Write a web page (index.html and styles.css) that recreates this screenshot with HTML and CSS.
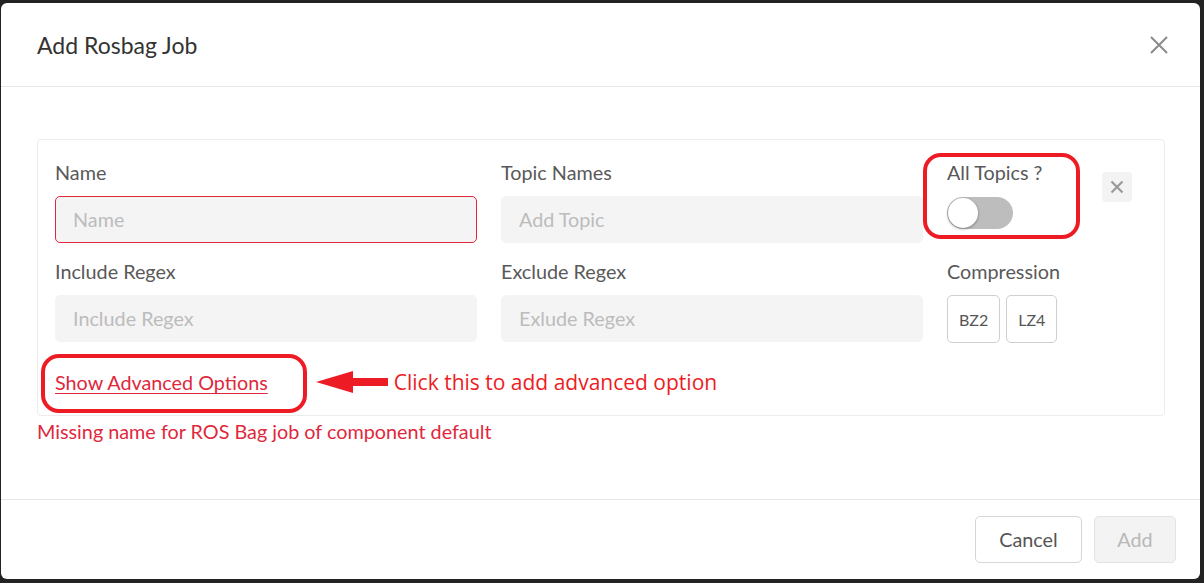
FILE: index.html
```html
<!DOCTYPE html>
<html>
<head>
<meta charset="utf-8">
<link rel="stylesheet" href="styles.css">
</head>
<body>
<div class="modal">
  <div class="modal-header">
    <h1 class="title">Add Rosbag Job</h1>
    <button class="close-btn" aria-label="Close">
      <svg width="20" height="20" viewBox="0 0 20 20"><path d="M2 2 L18 18 M18 2 L2 18" stroke="#8a8a8a" stroke-width="2" fill="none"/></svg>
    </button>
  </div>
  <div class="modal-body">
    <div class="card">
      <div class="grid">
        <div class="field">
          <label class="label">Name</label>
          <div class="input error"><span class="ph">Name</span></div>
        </div>
        <div class="field">
          <label class="label">Topic Names</label>
          <div class="input"><span class="ph">Add Topic</span></div>
        </div>
        <div class="field field-toggle">
          <label class="label">All Topics ?</label>
          <div class="toggle"><span class="knob"></span></div>
          <div class="ring ring-toggle"></div>
        </div>
        <button class="remove-btn" aria-label="Remove">
          <svg width="14" height="14" viewBox="0 0 14 14"><path d="M1.5 1.5 L12.5 12.5 M12.5 1.5 L1.5 12.5" stroke="#9a9a9a" stroke-width="2.2" fill="none"/></svg>
        </button>

        <div class="field">
          <label class="label">Include Regex</label>
          <div class="input"><span class="ph">Include Regex</span></div>
        </div>
        <div class="field">
          <label class="label">Exclude Regex</label>
          <div class="input"><span class="ph">Exlude Regex</span></div>
        </div>
        <div class="field">
          <label class="label">Compression</label>
          <div class="chips">
            <button class="chip">BZ2</button>
            <button class="chip">LZ4</button>
          </div>
        </div>
        <div></div>
      </div>
      <div class="adv-row">
        <div class="adv-wrap">
          <a class="adv-link">Show Advanced Options</a>
          <div class="ring ring-link"></div>
        </div>
        <div class="annotation">
          <svg class="arrow" width="72" height="24" viewBox="0 0 72 24"><polygon points="0,12 37,1 37,8 72,8 72,16 37,16 37,23" fill="#ed1c24"/></svg>
          <span class="anno-text">Click this to add advanced option</span>
        </div>
      </div>
    </div>
    <div class="error-text">Missing name for ROS Bag job of component default</div>
  </div>
  <div class="modal-footer">
    <button class="btn btn-cancel">Cancel</button>
    <button class="btn btn-add">Add</button>
  </div>
</div>
</body>
</html>
```

FILE: styles.css
```css
* { box-sizing: border-box; }
html, body { margin: 0; padding: 0; }
body {
  background: #232323;
  width: 1204px;
  height: 583px;
  overflow: hidden;
  font-family: Lato, "Liberation Sans", sans-serif;
}
.modal {
  margin: 3px 4px 0 1px;
  width: 1199px;
  height: 576px;
  background: #fff;
  border-radius: 6px;
  display: flex;
  flex-direction: column;
}
.modal-header {
  height: 84px;
  flex: none;
  display: flex;
  align-items: center;
  justify-content: space-between;
  padding: 0 31px 0 36px;
  border-bottom: 1px solid #e6e6e6;
}
.title {
  margin: 0;
  font-size: 23px;
  font-weight: 400;
  color: #333;
}
.close-btn {
  border: 0;
  background: none;
  padding: 0;
  width: 20px;
  height: 20px;
  display: flex;
}
.modal-body {
  flex: none;
  height: 413px;
  padding: 52px 35px 0 36px;
  border-bottom: 1px solid #e6e6e6;
}
.card {
  border: 1px solid #ececec;
  border-radius: 4px;
  padding: 20px 32px 19px 17px;
}
.grid {
  display: grid;
  grid-template-columns: 422px 422px 131px 30px;
  column-gap: 24px;
  row-gap: 16px;
}
.field {
  display: flex;
  flex-direction: column;
  position: relative;
}
.label {
  font-size: 19.8px;
  line-height: 24px;
  color: #595959;
  margin-bottom: 12px;
}
.input {
  height: 47px;
  background: #f4f4f4;
  border: 1px solid #f4f4f4;
  border-radius: 5px;
  display: flex;
  align-items: center;
  padding: 0 17px 1px;
}
.input.error { border-color: #e0283c; }
.ph {
  font-size: 19.8px;
  color: #bcbcbc;
}
.toggle {
  width: 66px;
  height: 32px;
  border-radius: 16px;
  background: #bdbdbd;
  position: relative;
  margin-top: 1px;
}
.knob {
  position: absolute;
  left: 1px;
  top: 1px;
  width: 30px;
  height: 30px;
  border-radius: 50%;
  background: #fff;
  box-shadow: 0 1px 3px rgba(0,0,0,0.35);
}
.ring {
  position: absolute;
  border: 4px solid #ed1c24;
  pointer-events: none;
}
.ring-toggle {
  left: -24px;
  top: -7px;
  width: 157px;
  height: 86px;
  border-radius: 18px;
}
.remove-btn {
  margin-top: 12px;
  width: 30px;
  height: 30px;
  border: 0;
  border-radius: 4px;
  background: #f3f3f3;
  display: flex;
  align-items: center;
  justify-content: center;
  padding: 0;
}
.chips {
  display: flex;
  gap: 6px;
}
.chip {
  height: 48px;
  padding: 0 11px;
  background: #fff;
  border: 1px solid #cfcfcf;
  border-radius: 5px;
  font-family: Lato, "Liberation Sans", sans-serif;
  font-size: 16px;
  color: #555;
}
.adv-row {
  display: flex;
  align-items: center;
  margin-top: 25px;
}
.adv-wrap {
  position: relative;
}
.adv-link {
  font-size: 19.8px;
  line-height: 24px;
  color: #e0283c;
  text-decoration: underline;
  text-underline-offset: 3px;
  display: block;
}
.ring-link {
  left: -14px;
  top: -16px;
  width: 266px;
  height: 59px;
  border-radius: 18px;
}
.annotation {
  display: flex;
  align-items: center;
  margin-left: 48px;
  gap: 6px;
}
.arrow { display: block; }
.anno-text {
  font-family: "Open Sans", "Noto Sans", sans-serif;
  font-size: 21px;
  color: #ed1c24;
}
.error-text {
  margin-top: 3px;
  font-size: 19.8px;
  line-height: 24px;
  color: #e0283c;
}
.modal-footer {
  flex: 1;
  display: flex;
  align-items: center;
  justify-content: flex-end;
  gap: 12px;
  padding: 0 24px 0 0;
}
.btn {
  height: 47px;
  border-radius: 5px;
  font-family: Lato, "Liberation Sans", sans-serif;
  font-size: 19.8px;
  padding-bottom: 2px;
}
.btn-cancel {
  width: 107px;
  background: #fff;
  border: 1px solid #d6d6d6;
  color: #555;
}
.btn-add {
  width: 82px;
  background: #f3f3f3;
  border: 1px solid #e3e3e3;
  color: #b8b8b8;
}
```
